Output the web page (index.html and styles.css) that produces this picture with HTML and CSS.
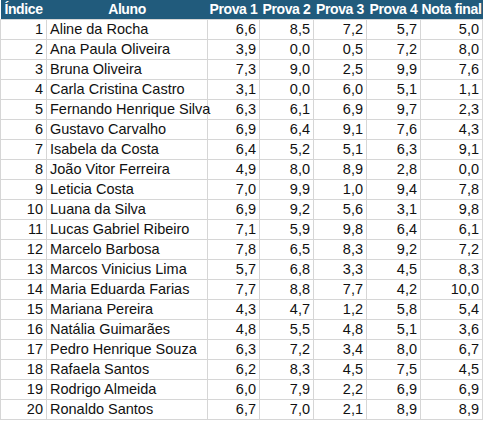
FILE: index.html
```html
<!DOCTYPE html>
<html lang="pt-BR">
<head>
<meta charset="utf-8">
<title>Notas</title>
<link rel="stylesheet" href="styles.css">
</head>
<body>
<table class="grade">
  <colgroup>
    <col class="c-idx"><col class="c-name"><col class="c-p1"><col class="c-p2"><col class="c-p3"><col class="c-p4"><col class="c-final">
  </colgroup>
  <thead>
    <tr><th>Índice</th><th>Aluno</th><th>Prova 1</th><th>Prova 2</th><th>Prova 3</th><th>Prova 4</th><th>Nota final</th></tr>
  </thead>
  <tbody>
    <tr><td>1</td><td class="name">Aline da Rocha</td><td>6,6</td><td>8,5</td><td>7,2</td><td>5,7</td><td>5,0</td></tr>
    <tr><td>2</td><td class="name">Ana Paula Oliveira</td><td>3,9</td><td>0,0</td><td>0,5</td><td>7,2</td><td>8,0</td></tr>
    <tr><td>3</td><td class="name">Bruna Oliveira</td><td>7,3</td><td>9,0</td><td>2,5</td><td>9,9</td><td>7,6</td></tr>
    <tr><td>4</td><td class="name">Carla Cristina Castro</td><td>3,1</td><td>0,0</td><td>6,0</td><td>5,1</td><td>1,1</td></tr>
    <tr><td>5</td><td class="name">Fernando Henrique Silva</td><td>6,3</td><td>6,1</td><td>6,9</td><td>9,7</td><td>2,3</td></tr>
    <tr><td>6</td><td class="name">Gustavo Carvalho</td><td>6,9</td><td>6,4</td><td>9,1</td><td>7,6</td><td>4,3</td></tr>
    <tr><td>7</td><td class="name">Isabela da Costa</td><td>6,4</td><td>5,2</td><td>5,1</td><td>6,3</td><td>9,1</td></tr>
    <tr><td>8</td><td class="name">João Vitor Ferreira</td><td>4,9</td><td>8,0</td><td>8,9</td><td>2,8</td><td>0,0</td></tr>
    <tr><td>9</td><td class="name">Leticia Costa</td><td>7,0</td><td>9,9</td><td>1,0</td><td>9,4</td><td>7,8</td></tr>
    <tr><td>10</td><td class="name">Luana da Silva</td><td>6,9</td><td>9,2</td><td>5,6</td><td>3,1</td><td>9,8</td></tr>
    <tr><td>11</td><td class="name">Lucas Gabriel Ribeiro</td><td>7,1</td><td>5,9</td><td>9,8</td><td>6,4</td><td>6,1</td></tr>
    <tr><td>12</td><td class="name">Marcelo Barbosa</td><td>7,8</td><td>6,5</td><td>8,3</td><td>9,2</td><td>7,2</td></tr>
    <tr><td>13</td><td class="name">Marcos Vinicius Lima</td><td>5,7</td><td>6,8</td><td>3,3</td><td>4,5</td><td>8,3</td></tr>
    <tr><td>14</td><td class="name">Maria Eduarda Farias</td><td>7,7</td><td>8,8</td><td>7,7</td><td>4,2</td><td>10,0</td></tr>
    <tr><td>15</td><td class="name">Mariana Pereira</td><td>4,3</td><td>4,7</td><td>1,2</td><td>5,8</td><td>5,4</td></tr>
    <tr><td>16</td><td class="name">Natália Guimarães</td><td>4,8</td><td>5,5</td><td>4,8</td><td>5,1</td><td>3,6</td></tr>
    <tr><td>17</td><td class="name">Pedro Henrique Souza</td><td>6,3</td><td>7,2</td><td>3,4</td><td>8,0</td><td>6,7</td></tr>
    <tr><td>18</td><td class="name">Rafaela Santos</td><td>6,2</td><td>8,3</td><td>4,5</td><td>7,5</td><td>4,5</td></tr>
    <tr><td>19</td><td class="name">Rodrigo Almeida</td><td>6,0</td><td>7,9</td><td>2,2</td><td>6,9</td><td>6,9</td></tr>
    <tr><td>20</td><td class="name">Ronaldo Santos</td><td>6,7</td><td>7,0</td><td>2,1</td><td>8,9</td><td>8,9</td></tr>
  </tbody>
</table>
</body>
</html>
```
FILE: styles.css
```css
html, body {
  margin: 0;
  padding: 0;
  background: #ffffff;
}
.grade {
  border-collapse: collapse;
  table-layout: fixed;
  width: 482px;
  font-family: "Liberation Sans", Arial, sans-serif;
  font-size: 14.5px;
  color: #111;
}
.c-idx { width: 46px; }
.c-name { width: 161px; }
.c-p1 { width: 52px; }
.c-p2 { width: 54px; }
.c-p3 { width: 53px; }
.c-p4 { width: 54px; }
.c-final { width: 62px; }
.grade th {
  background: #215b7c;
  color: #ffffff;
  font-size: 14px;
  font-weight: bold;
  height: 19px;
  padding: 0;
  text-align: center;
  white-space: nowrap;
  letter-spacing: -0.4px;
  line-height: 19px;
}
.grade td {
  height: 19px;
  padding: 0 3px 0 2px;
  border: 1px solid #d6d6d6;
  text-align: right;
  line-height: 19px;
  white-space: nowrap;
}
.grade td.name {
  text-align: left;
  padding-left: 3px;
}
```
